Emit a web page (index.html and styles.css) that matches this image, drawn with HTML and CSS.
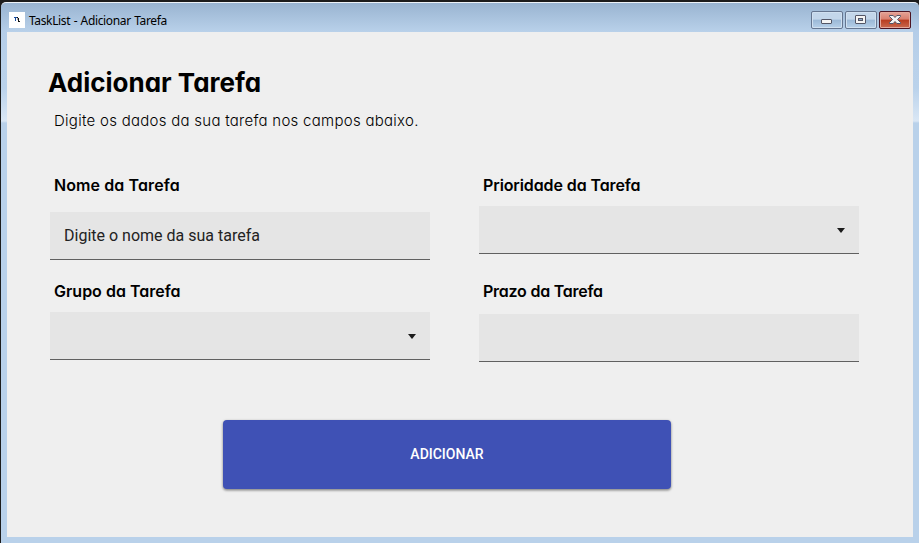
FILE: index.html
```html
<!DOCTYPE html>
<html lang="pt-BR">
<head>
<meta charset="utf-8">
<title>TaskList - Adicionar Tarefa</title>
<link rel="stylesheet" href="styles.css">
</head>
<body>
<div class="window">
  <header class="titlebar">
    <svg class="app-icon" width="16" height="16" viewBox="0 0 16 16" shape-rendering="crispEdges"><path fill="#fff" d="M0 0h16v16H0z"/><path fill="#174a9c" d="M5 5h3v1H5zM6 6h1v3H6z"/><path fill="#a9a3a0" d="M8 6h1v2H8z"/><path fill="#111" d="M8 5h1v1H8zM9 6h1v3h1v1H9z"/></svg>
    <span class="caption">TaskList - Adicionar Tarefa</span>
    <div class="controls">
      <button class="control" aria-label="Minimizar"><svg width="30" height="16" viewBox="0 0 30 16"><rect x="9.5" y="7.5" width="10" height="4" rx=".5" fill="#f4f4f4" stroke="#535666"/></svg></button>
      <button class="control" aria-label="Maximizar"><svg width="30" height="16" viewBox="0 0 30 16"><rect x="9.5" y="3.5" width="10" height="8" rx=".5" fill="#f4f4f4" stroke="#535666"/><rect x="12.5" y="6.5" width="4" height="2" fill="#8faccc" stroke="#535666"/></svg></button>
      <button class="control close" aria-label="Fechar"><svg width="30" height="16" viewBox="0 0 30 16"><path d="M9.5 3.5h3.7l1.8 2 1.8-2h3.7v1l-3 3 3 3v1h-3.7l-1.8-2-1.8 2H9.5v-1l3-3-3-3z" fill="#f4f4f4" stroke="#535666"/></svg></button>
    </div>
  </header>
  <main class="content">
    <h1 class="title">Adicionar Tarefa</h1>
    <p class="subtitle">Digite os dados da sua tarefa nos campos abaixo.</p>
    <form class="form">
      <div class="column">
        <div class="label name-label">Nome da Tarefa</div>
        <div class="field name-field">Digite o nome da sua tarefa</div>
        <div class="label group-label">Grupo da Tarefa</div>
        <div class="field select"><svg width="8" height="5" viewBox="0 0 8 5"><path d="M0 0h8L4 5z" fill="#1b1b1b"/></svg></div>
      </div>
      <div class="column">
        <div class="label priority-label">Prioridade da Tarefa</div>
        <div class="field select priority-field"><svg width="8" height="5" viewBox="0 0 8 5"><path d="M0 0h8L4 5z" fill="#1b1b1b"/></svg></div>
        <div class="label due-label">Prazo da Tarefa</div>
        <div class="field due-field"></div>
      </div>
    </form>
    <button class="submit">ADICIONAR</button>
  </main>
</div>
</body>
</html>
```
FILE: styles.css
```css
* { box-sizing: border-box; }
body {
  margin: 0;
  height: 543px;
  padding: 2px 0 0 1px;
  overflow: hidden;
  background: #1c1c1c;
}
.window {
  height: 541px;
  padding: 0 6px 6px;
  border-top: 1px solid #edf2f8;
  border-radius: 5px 5px 0 0;
  background: linear-gradient(#99b4d1 0, #b4cde8 28px, #b9d1ea 60px, #bad2eb 85px, #dae7f5 118px, #b9d1ea 120px);
}
.titlebar {
  display: flex;
  height: 29px;
  padding: 9px 2px 0 2px;
  background: linear-gradient(#99b4d1, #b9d1ea);
}
.caption {
  margin: 0 auto 0 4px;
  font: 12px/17px "Noto Sans", sans-serif;
  letter-spacing: -.36px;
  word-spacing: .7px;
  color: #000;
}
.controls { display: flex; gap: 2px; margin-top: -1px; }
.control {
  width: 32px;
  height: 18px;
  padding: 0;
  border: 1px solid #65758f;
  border-radius: 2px;
  background: linear-gradient(#c3d6ea 0 45%, #9bb8d6 50%, #b7d0e9);
  box-shadow: inset 0 0 0 1px #d0e0f0;
}
.control svg { display: block; }
.close {
  border-color: #4c1422;
  background: linear-gradient(#e5a397, #d97f6e 45%, #b83c20 50%, #c96a50);
  box-shadow: inset 0 0 0 1px #e4a89c;
}
.content { height: 505px; padding-top: 34px; background: #efefef; }
.title {
  margin: 0 0 0 41px;
  font: 700 26px/34px Inter, sans-serif;
  font-feature-settings: "cv11";
  color: #000;
}
.subtitle {
  margin: 11px 0 0 47px;
  font: 300 15px/20px Inter, sans-serif;
  font-feature-settings: "cv11";
  letter-spacing: .27px;
  color: #000;
}
.form { display: grid; grid-template-columns: 380px 380px; gap: 49px; margin: 44px 0 0 43px; }
.label {
  height: 20px;
  padding-left: 4px;
  font: 600 16px/20px Inter, sans-serif;
  font-feature-settings: "cv11";
  color: #000;
}
.name-label { letter-spacing: .1px; }
.priority-label { letter-spacing: -.1px; }
.due-label { letter-spacing: -.24px; }
.field {
  height: 48px;
  border-bottom: 1px solid #606060;
  background: #e5e5e5;
}
.name-field {
  margin: 17px 0 21px;
  padding-left: 14px;
  font: 16px/47px Roboto, sans-serif;
  color: #222;
}
.group-label { margin-bottom: 11px; }
.priority-field { margin: 11px 0 27px; }
.due-field { margin-top: 13px; }
.select { display: flex; align-items: center; justify-content: flex-end; padding: 2px 14px 0 0; }
.submit {
  display: block;
  width: 448px;
  height: 69px;
  margin: 58px 0 0 216px;
  padding: 0;
  border: 0;
  border-radius: 4px;
  background: #3f51b5;
  color: #fff;
  font: 500 14px/69px Roboto, sans-serif;
  box-shadow: 0 1px 3px rgba(0, 0, 0, .4), 0 2px 2px rgba(0, 0, 0, .12);
}
```
